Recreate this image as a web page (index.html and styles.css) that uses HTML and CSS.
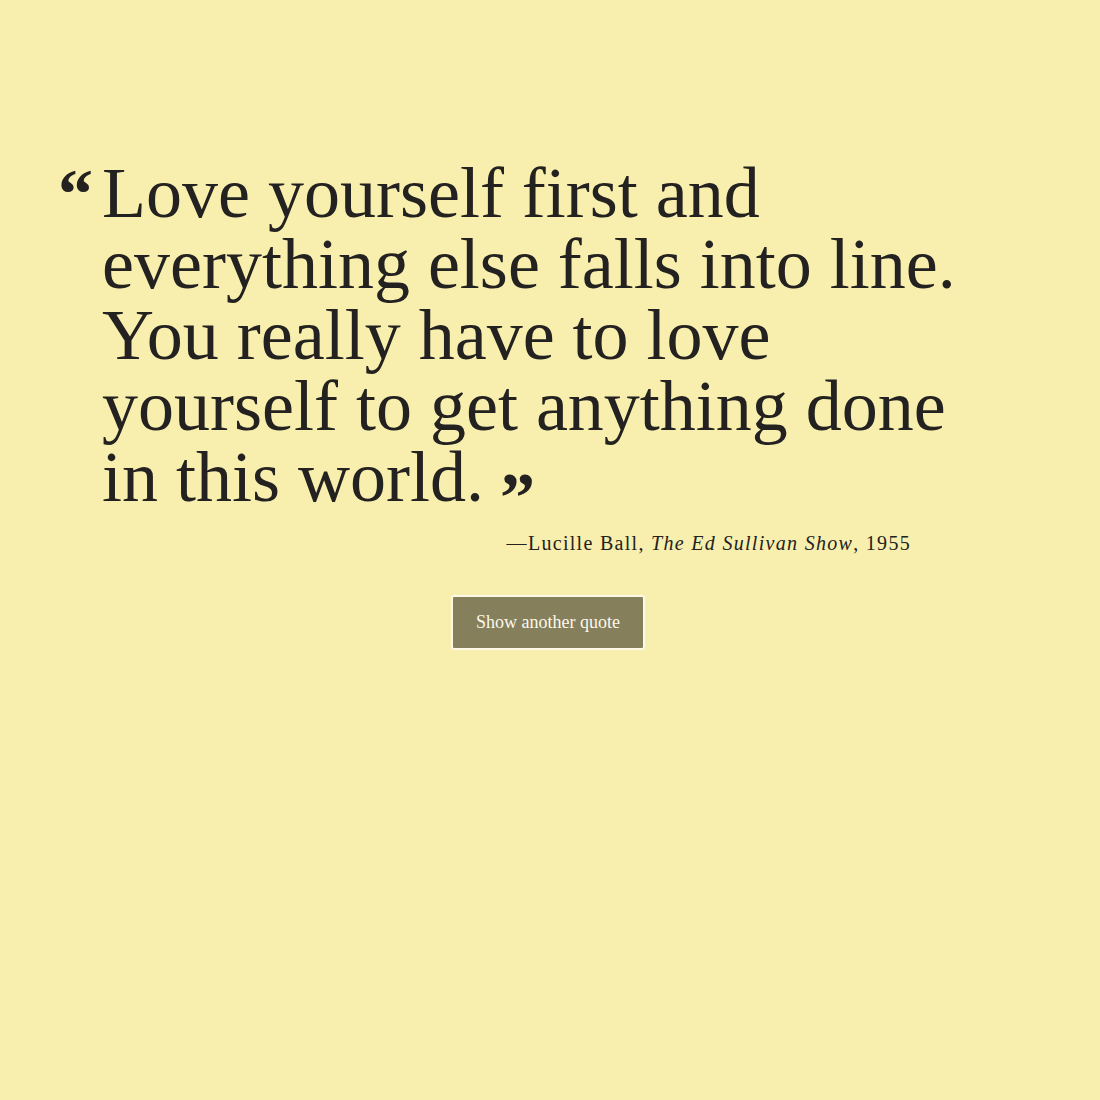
FILE: index.html
```html
<!DOCTYPE html>
<html lang="en">
<head>
<meta charset="utf-8">
<title>Quote</title>
<link rel="stylesheet" href="styles.css">
</head>
<body>
<main class="page">
  <figure class="quote">
    <blockquote class="quote-body">
      <span class="mark mark-open">“</span>
      <p class="quote-text">Love yourself first and<br>everything else falls into line.<br>You really have to love<br>yourself to get anything done<br>in this world.<span class="mark mark-close">”</span></p>
    </blockquote>
    <figcaption class="attribution">—Lucille Ball, <cite>The Ed Sullivan Show</cite>, 1955</figcaption>
  </figure>
  <div class="actions">
    <button class="btn" type="button">Show another quote</button>
  </div>
</main>
</body>
</html>
```
FILE: styles.css
```css
html, body {
  margin: 0;
  padding: 0;
  background: #f8efae;
}
body {
  font-family: "Liberation Serif", "DejaVu Serif", serif;
  color: #232220;
}
.page {
  padding: 158px 0 0 0;
}
.quote {
  margin: 0;
  width: 911px;
}
.quote-body {
  margin: 0;
  padding-left: 58px;
  display: flex;
}
.mark {
  font-weight: bold;
  font-size: 70px;
  line-height: 71px;
}
.mark-open {
  width: 44px;
  flex: none;
}
.mark-close {
  margin-left: 16px;
  line-height: 0;
  vertical-align: -20px;
}
.quote-text {
  margin: 0;
  font-size: 72px;
  line-height: 71px;
  white-space: nowrap;
}
.attribution {
  margin-top: 18px;
  text-align: right;
  font-size: 20px;
  line-height: 24px;
  letter-spacing: 1.3px;
}
.attribution cite {
  font-style: italic;
}
.actions {
  margin-top: 40px;
  display: flex;
  justify-content: center;
  padding-right: 4px;
}
.btn {
  font-family: "Liberation Serif", "DejaVu Serif", serif;
  font-size: 18px;
  color: #fbf8ea;
  background: #857f5c;
  border: 2px solid #fdf9e6;
  border-radius: 3px;
  height: 55px;
  width: 194px;
  padding: 0;
}
```
